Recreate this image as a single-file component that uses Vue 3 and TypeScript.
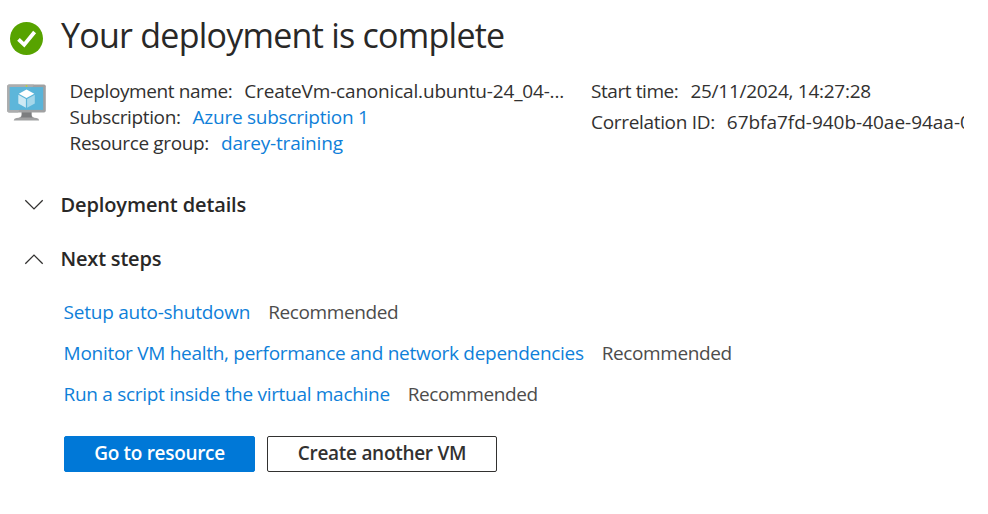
<script setup lang="ts">
import { ref } from 'vue'

interface Step {
  label: string
  size: 'short' | 'long' | 'medium'
}

const detailsOpen = ref(false)
const stepsOpen = ref(true)

const steps: Step[] = [
  { label: 'Setup auto-shutdown', size: 'short' },
  { label: 'Monitor VM health, performance and network dependencies', size: 'long' },
  { label: 'Run a script inside the virtual machine', size: 'medium' },
]
</script>

<template>
  <main class="page">
    <header class="title-row">
      <svg class="check" viewBox="0 0 33 33" aria-hidden="true">
        <circle cx="16.5" cy="16.5" r="16.5" fill="#57a300" />
        <path d="M8.5 17.4 L14.2 22.8 L24.6 10" fill="none" stroke="#fff" stroke-width="3.8" />
      </svg>
      <h1>Your deployment is complete</h1>
    </header>

    <section class="summary">
      <svg class="vm" viewBox="0 0 39 38" aria-hidden="true">
        <path d="M14.6 27.5 H24.6 V31 Q24.8 33.8 29.5 33.9 Q32 34.2 32.2 36.4 H6.7 Q7 34.2 9.5 33.9 Q14.4 33.8 14.6 31 Z" fill="#a0a1a2" />
        <path d="M14.8 28 H24.4 V31 Q24.6 32.6 25.5 33.4 H13.7 Q14.6 32.6 14.8 31 Z" fill="#7c7d7f" />
        <rect x="0.2" y="0.5" width="38.6" height="28" rx="1.8" fill="#a0a1a2" />
        <path d="M2 0.5 H27 L11 28.5 H2 Q0.2 28.5 0.2 26.7 V2.3 Q0.2 0.5 2 0.5 Z" fill="#acadae" />
        <rect x="2.8" y="3.1" width="33.4" height="22.8" fill="#59b4d9" />
        <path d="M2.8 3.1 H24.8 L12 25.9 H2.8 Z" fill="#5db6da" />
        <circle cx="19.5" cy="1.9" r="0.9" fill="#b8d432" />
        <path d="M19.5 5.4 L27.3 9.8 L19.5 14.1 L11.8 9.8 Z" fill="#fff" />
        <path d="M11.3 10.8 L18.9 15.1 V23.7 L11.3 19.4 Z" fill="#cde9f4" />
        <path d="M27.8 10.8 L20.1 15.1 V23.7 L27.8 19.4 Z" fill="#a5d7ea" />
      </svg>
      <dl class="facts">
        <div class="fact"><dt class="name-label">Deployment name:</dt><dd class="name-value">CreateVm-canonical.ubuntu-24_04-...</dd></div>
        <div class="fact"><dt class="sub-label">Subscription:</dt><dd><a class="sub-value" href="#">Azure subscription 1</a></dd></div>
        <div class="fact"><dt class="group-label">Resource group:</dt><dd><a class="group-value" href="#">darey-training</a></dd></div>
      </dl>
      <dl class="facts spaced">
        <div class="fact"><dt class="start-label">Start time:</dt><dd class="start-value">25/11/2024, 14:27:28</dd></div>
        <div class="fact"><dt class="corr-label">Correlation ID:</dt><dd class="corr-value">67bfa7fd-940b-40ae-94aa-0</dd></div>
      </dl>
    </section>

    <button class="section-toggle" type="button" @click="detailsOpen = !detailsOpen">
      <svg class="chevron" :class="{ up: detailsOpen }" viewBox="0 0 20 12" aria-hidden="true">
        <path d="M1.3 1.2 L10 9.9 L18.7 1.2" />
      </svg>
      <span class="details-title">Deployment details</span>
    </button>

    <button class="section-toggle" type="button" @click="stepsOpen = !stepsOpen">
      <svg class="chevron" :class="{ up: stepsOpen }" viewBox="0 0 20 12" aria-hidden="true">
        <path d="M1.3 1.2 L10 9.9 L18.7 1.2" />
      </svg>
      <span class="steps-title">Next steps</span>
    </button>

    <template v-if="stepsOpen">
      <ul class="steps">
        <li v-for="step in steps" :key="step.label">
          <a :class="step.size" href="#">{{ step.label }}</a>
          <span class="hint">Recommended</span>
        </li>
      </ul>
      <div class="actions">
        <button class="primary" type="button">Go to resource</button>
        <button class="secondary" type="button">Create another VM</button>
      </div>
    </template>
  </main>
</template>

<style>
body {
  background: #fff;
}
</style>

<style scoped>
.page {
  box-sizing: border-box;
  height: 514px;
  padding: 13px 24px 0 7px;
  overflow: hidden;
  color: #323130;
  font-family: "Open Sans", "Noto Sans", sans-serif;
  font-size: 19px;
  line-height: 26px;
  letter-spacing: -0.27px;
  white-space: nowrap;
}
.title-row {
  display: flex;
  align-items: flex-start;
  gap: 18px;
  height: 65px;
  padding-left: 3px;
}
.check {
  width: 33px;
  height: 33px;
  margin-top: 9px;
}
h1 {
  margin: 0;
  color: #292827;
  font-size: 34px;
  font-weight: 400;
  line-height: 44px;
  letter-spacing: -0.75px;
}
.summary {
  display: grid;
  grid-template-columns: 62.6px 521.4px 1fr;
  height: 114px;
}
.vm {
  width: 39px;
  height: 38px;
  margin-top: 6px;
}
.facts {
  display: flex;
  flex-direction: column;
  min-width: 0;
  margin: 0;
  overflow: hidden;
}
.spaced {
  gap: 5px;
}
.fact {
  display: flex;
  gap: 12px;
}
dd {
  margin: 0;
}
a {
  color: #0f7fd9;
  text-decoration: none;
}
.name-label { letter-spacing: -0.39px; }
.name-value { letter-spacing: -0.18px; }
.sub-label { letter-spacing: -0.36px; }
.sub-value { letter-spacing: -0.25px; }
.group-label { letter-spacing: -0.36px; }
.group-value { letter-spacing: -0.2px; }
.start-label { letter-spacing: -0.42px; }
.corr-label { letter-spacing: -0.32px; }
.corr-value { letter-spacing: -0.02px; }
button {
  margin: 0;
  font-family: inherit;
  white-space: nowrap;
  cursor: pointer;
}
.section-toggle {
  display: flex;
  align-items: center;
  gap: 16.6px;
  height: 26px;
  margin-bottom: 28px;
  padding: 0 0 0 17px;
  border: 0;
  background: none;
  color: #292827;
  font-size: 20px;
  font-weight: 600;
  line-height: 26px;
}
.details-title { letter-spacing: -0.13px; }
.steps-title { letter-spacing: -0.21px; }
.chevron {
  width: 20px;
  height: 12px;
}
.chevron path {
  fill: none;
  stroke: #323130;
  stroke-width: 1.3;
}
.up {
  transform: rotate(180deg);
}
.steps {
  display: flex;
  flex-direction: column;
  margin: -8px 0 0;
  padding: 0 0 0 56.6px;
  list-style: none;
  line-height: 41px;
}
.steps li {
  display: flex;
  gap: 18px;
}
.short { letter-spacing: -0.24px; }
.medium { letter-spacing: -0.3px; }
.long { letter-spacing: -0.285px; }
.hint {
  color: #4d4c4b;
  letter-spacing: -0.4px;
}
.actions {
  display: flex;
  gap: 12px;
  padding: 21px 0 0 57px;
}
.actions button {
  box-sizing: border-box;
  height: 36px;
  padding: 0 0 2px;
  border-radius: 2px;
  font-size: 19px;
  font-weight: 600;
  line-height: 32px;
}
.actions .primary {
  width: 191px;
  border: 1px solid #0078d7;
  background: #0078d7;
  color: #fff;
  letter-spacing: -0.31px;
}
.actions .secondary {
  width: 230px;
  border: 1px solid #323130;
  background: #fff;
  color: #323130;
  letter-spacing: -0.29px;
}
</style>
